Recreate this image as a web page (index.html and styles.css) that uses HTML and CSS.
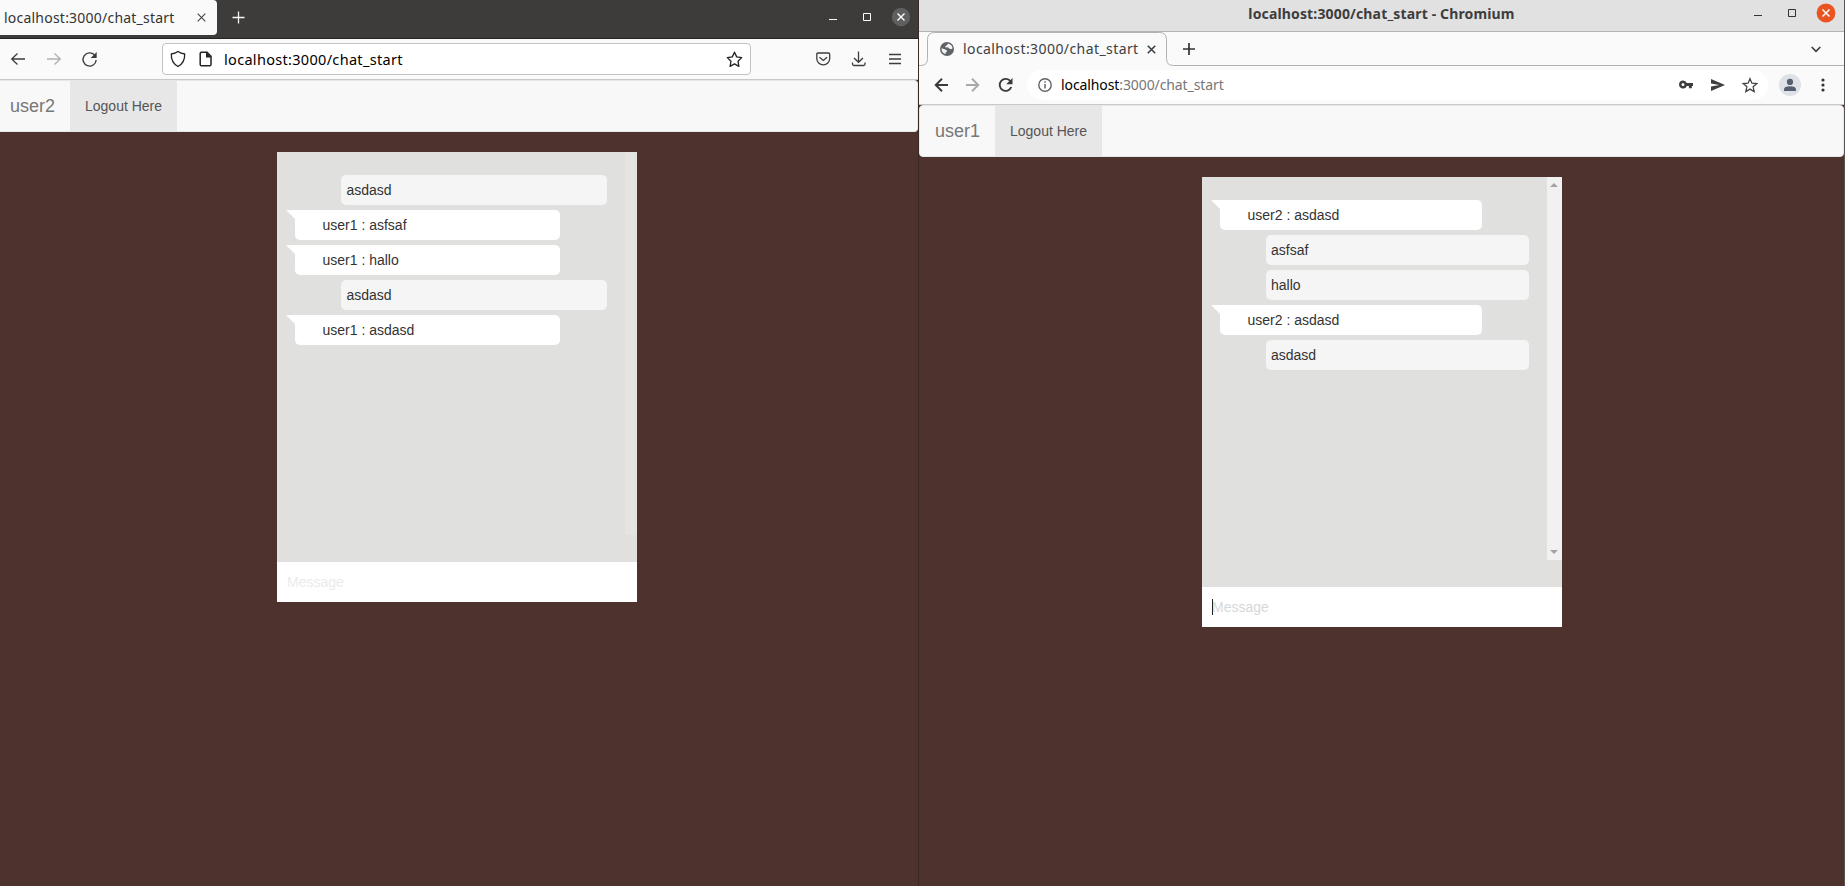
FILE: index.html
```html
<!DOCTYPE html>
<html lang="en">
<head>
<meta charset="utf-8">
<title>chat_start</title>
<link rel="stylesheet" href="styles.css">
</head>
<body>
<div class="desktop">
  <section class="window firefox">
    <header class="ff-title">
      <div class="ff-tab"><span class="ui ff-tab-text">localhost:3000/chat_start</span>
        <svg class="ff-tab-x" width="9" height="9" viewBox="0 0 9 9"><path d="M.7.7l7.6 7.6M8.3.7L.7 8.3" stroke="#444" stroke-width="1.1"/></svg>
      </div>
      <svg class="ff-plus" width="13" height="13" viewBox="0 0 13 13"><path d="M6.5 .5v12M.5 6.5h12" stroke="#f5f5f5" stroke-width="1.3"/></svg>
      <svg class="ff-controls" width="84" height="20" viewBox="0 0 84 20"><path d="M1 12.5h8" stroke="#fff"/><path d="M35.5 6.5h7v7h-7z" fill="none" stroke="#fff"/><circle cx="73" cy="10" r="9.2" fill="#5f5f5f"/><path d="M69.5 6.5l7 7M76.5 6.5l-7 7" stroke="#fff" stroke-width="1.4"/></svg>
    </header>
    <div class="ff-toolbar">
      <svg class="ff-nav" width="90" height="18" viewBox="0 0 90 18" fill="none" stroke-width="1.3"><path d="M15 9H1.5M7.5 3.5L1.7 9l5.8 5.5" stroke="#3d3d3d"/><path d="M37 9h13.500M44.500 3.500L50.300 9l-5.800 5.500" stroke="#b0b0b0"/><path d="M84.500 5A6.600 6.600 0 1 0 86.200 10" stroke="#3d3d3d" stroke-width="1.400"/><path d="M86.700 2v6h-6z" fill="#3d3d3d"/></svg>
      <div class="ff-url">
        <svg width="16" height="18" viewBox="0 0 16 18"><path d="M8 1.500C10 3 12.500 3.800 14.700 4c.2 5-1.700 9.800-6.700 12.500C3 13.800 1.100 9 1.300 4 3.500 3.800 6 3 8 1.500z" fill="none" stroke="#222" stroke-width="1.300"/></svg>
        <svg class="ff-page" width="13" height="16" viewBox="0 0 13 16"><path d="M2.500 1.200h5.500l4 4v8.300q0 1.300-1.300 1.300H2.500q-1.300 0-1.300-1.300v-11q0-1.300 1.300-1.300z" fill="none" stroke="#222" stroke-width="1.500"/><path d="M7 1v5.500h5.500z" fill="#222"/></svg>
        <span class="ui ff-url-text">localhost:3000/chat_start</span>
        <svg class="ff-star" width="17" height="17" viewBox="0 0 17 17"><path d="M8.500 1.200l2.200 4.700 5 .7-3.700 3.600.9 5.200-4.400-2.500-4.400 2.500.9-5.200L1.300 6.600l5-.7z" fill="none" stroke="#222" stroke-width="1.300" stroke-linejoin="round"/></svg>
      </div>
      <svg class="ff-actions" width="90" height="18" viewBox="0 0 90 18" fill="none" stroke="#3d3d3d" stroke-width="1.300"><path d="M3 3h10.500q1.200 0 1.200 1.200V8.500a6.400 6.400 0 0 1-12.900 0V4.200Q1.800 3 3 3z"/><path d="M4.500 7.200l3.800 3.300 3.800-3.300"/><path d="M43.500 1.500v10.500M39 8l4.500 4.300L48 8M37.500 12.500v1.500q0 1.500 1.500 1.500h9.500q1.500 0 1.500-1.500v-1.500"/><path d="M74 4.500h12M74 9h12M74 13.500h12"/></svg>
    </div>
    <nav class="navbar"><span class="brand">user2</span><span class="logout">Logout Here</span></nav>
    <main class="page">
      <div class="chat">
        <div class="list">
          <ul class="messages">
            <li class="self">asdasd</li><li class="other">user1 : asfsaf</li><li class="other">user1 : hallo</li><li class="self">asdasd</li><li class="other">user1 : asdasd</li>
          </ul>
          <div class="scroll"></div>
        </div>
        <div class="input">Message</div>
      </div>
    </main>
  </section>
  <section class="window chromium">
    <header class="cr-title"><span class="ui cr-title-text">localhost:3000/chat_start - Chromium</span>
      <svg class="cr-controls" width="84" height="20" viewBox="0 0 84 20"><path d="M1 12.500h8" stroke="#333"/><path d="M35.500 6.500h7v7h-7z" fill="none" stroke="#333"/><circle cx="73" cy="10" r="9.400" fill="#e95420"/><path d="M69.500 6.500l7 7M76.500 6.500l-7 7" stroke="#fff" stroke-width="1.500"/></svg>
    </header>
    <div class="cr-tabs">
      <svg class="cr-shape" width="260" height="34" viewBox="0 0 260 34"><path d="M0 33.500H2q6.500 0 6.500-7V7.500Q8.500.5 15.500.5h225q7 0 7 7v19q0 7 7 7h6" fill="none" stroke="#b2b2b2"/></svg>
      <svg class="cr-globe" width="14" height="14" viewBox="0 0 14 14"><circle cx="7" cy="7" r="7" fill="#5f6368"/><path d="M1.500 6.300l3.800 1.200 1.800 1.200-.4 1.200-1.300.3.600 1.900Q1.500 11.500 1.500 6.300zM7.800 1.600l-.5 1.500-1.900.8v1.500l2.400-.2 1.400 1.400 1.900.6 1.400-.6Q12.500 2.500 7.800 1.600z" fill="#f4f4f4"/></svg>
      <span class="ui cr-tab-text">localhost:3000/chat_start</span>
      <svg class="cr-x" width="9" height="9" viewBox="0 0 9 9"><path d="M.8.8l7.400 7.400M8.200.8L.8 8.200" stroke="#3c4043" stroke-width="1.600"/></svg>
      <svg class="cr-plus" width="12" height="12" viewBox="0 0 12 12"><path d="M6 0v12M0 6h12" stroke="#333" stroke-width="1.700"/></svg>
      <svg class="cr-chevron" width="10" height="7" viewBox="0 0 10 7"><path d="M.7 1L5 5.300 9.300 1" fill="none" stroke="#3d3d3d" stroke-width="1.700"/></svg>
    </div>
    <div class="cr-toolbar">
      <svg class="cr-nav" width="80" height="16" viewBox="0 0 80 16" fill="none" stroke-width="1.900"><path d="M14 8H2M8 1.800L1.700 8 8 14.200" stroke="#3a3a3a"/><path d="M32 8h12M38 1.800L44.300 8 38 14.200" stroke="#a8a8a8"/><path d="M76.500 4.300A6 6 0 1 0 77.300 10" stroke="#3a3a3a"/><path d="M78.500 1v6.300h-6.300z" fill="#3a3a3a"/></svg>
      <div class="cr-url">
        <svg width="14" height="14" viewBox="0 0 14 14"><circle cx="7" cy="7" r="6.200" fill="none" stroke="#5f6368" stroke-width="1.400"/><path d="M7 6v4.500M7 3.300v1.500" stroke="#5f6368" stroke-width="1.500"/></svg>
        <span class="ui cr-url-text"><b>localhost</b>:3000/chat_start</span>
        <svg class="cr-page" width="80" height="16" viewBox="0 0 80 16"><path fill-rule="evenodd" d="M5 3.500a4 4 0 0 1 3.800 2.600H15v2.800h-1.200v2.400h-2.900V8.900H8.800A4 4 0 1 1 5 3.500zM5 6a1.500 1.500 0 1 0 0 3 1.500 1.500 0 0 0 0-3z" fill="#3d3d3d"/><path d="M33 2l14 6-14 6V9.500L41.500 8 33 6.500z" fill="#3d3d3d"/><path d="M72 1.700l1.900 4.500 4.900.4-3.700 3.200 1.100 4.800-4.200-2.500-4.200 2.500 1.100-4.800-3.700-3.200 4.900-.4z" fill="none" stroke="#444" stroke-width="1.300"/></svg>
      </div>
      <svg class="cr-user" width="22" height="22" viewBox="0 0 22 22"><circle cx="11" cy="11" r="11" fill="#dee1e6"/><circle cx="11" cy="7.900" r="3.100" fill="#555d70"/><path d="M5 17v-1.500q0-3.300 6-3.300t6 3.300V17z" fill="#555d70"/></svg>
      <svg class="cr-dots" width="4" height="14" viewBox="0 0 4 14" fill="#333"><circle cx="2" cy="2" r="1.600"/><circle cx="2" cy="7" r="1.600"/><circle cx="2" cy="12" r="1.600"/></svg>
    </div>
    <nav class="navbar"><span class="brand">user1</span><span class="logout">Logout Here</span></nav>
    <main class="page">
      <div class="chat">
        <div class="list">
          <ul class="messages">
            <li class="other">user2 : asdasd</li><li class="self">asfsaf</li><li class="self">hallo</li><li class="other">user2 : asdasd</li><li class="self">asdasd</li>
          </ul>
          <div class="scroll">
            <svg width="8" height="4" viewBox="0 0 8 4"><path d="M0 4l4-4 4 4z" fill="#a3a3a3"/></svg>
            <svg width="8" height="4" viewBox="0 0 8 4"><path d="M0 0h8L4 4z" fill="#a3a3a3"/></svg>
          </div>
        </div>
        <div class="input focused">Message</div>
      </div>
    </main>
  </section>
</div>
</body>
</html>
```

FILE: styles.css
```css
* { box-sizing: border-box; }
body { margin: 0; font: 14px/20px "Liberation Sans", Arial, sans-serif; color: #333; overflow: hidden; }
svg { display: block; flex: none; }
.desktop { display: grid; grid-template-columns: 919px 926px; height: 886px; background: #4e322e; }
.window { display: flex; flex-direction: column; min-width: 0; }
.ui { font-family: "Noto Sans", "Open Sans", sans-serif; white-space: nowrap; flex: none; }
.firefox { border-right: 1px solid #3a2825; }
.chromium { border-right: 1px solid #5a5553; }

/* Firefox chrome */
.ff-title { height: 39px; background: #3d3c3a; border-bottom: 1px solid #242323; display: flex; align-items: flex-start; }
.ff-tab { width: 217px; height: 35px; background: #fafafa; border-radius: 0 4px 4px 0; display: flex; align-items: center; padding-left: 4px; }
.ff-tab-text { width: 170px; font-size: 14px; letter-spacing: .22px; }
.ff-tab-x { margin-left: 22.500px; }
.ff-plus { margin: 11px 0 0 15px; }
.ff-controls { margin: 7px 6px 0 auto; }
.ff-toolbar { height: 41px; background: #fafafa; border-bottom: 1px solid #c8c8c8; display: flex; align-items: center; }
.ff-nav { margin-left: 10px; }
.ff-url { margin-left: 62px; width: 589px; height: 32px; background: #fff; border: 1px solid #c2c2c2; border-radius: 4px; display: flex; align-items: center; padding: 0 7px 0 7px; }
.ff-page { margin-left: 13px; }
.ff-url-text { margin-left: 12px; color: #000; font-size: 14.500px; letter-spacing: .31px; }
.ff-star { margin-left: auto; }
.ff-actions { margin-left: 64px; }

/* Chromium chrome */
.cr-title { height: 32px; background: #e1e1e1; border-bottom: 1px solid #b4b4b4; display: grid; grid-template-columns: 1fr auto 1fr; align-items: start; }
.cr-title-text { grid-column: 2; font-weight: 700; font-size: 14px; letter-spacing: .15px; line-height: 27px; color: #3d3d3d; }
.cr-controls { justify-self: end; margin: 3px 7px 0 0; }
.cr-tabs { height: 34px; background: #fafafa; display: flex; align-items: center; box-shadow: inset 0 -1px #b2b2b2; }
.cr-shape { background: #fafafa; margin-right: -239px; }
.cr-globe, .cr-x, .cr-tab-text { position: relative; }
.cr-tab-text { margin-left: 9px; width: 176px; font-size: 14px; letter-spacing: .42px; color: #3c4043; }
.cr-x { margin-left: 7.500px; }
.cr-plus { margin-left: 27.500px; }
.cr-chevron { margin: 0 23px 0 auto; }
.cr-toolbar { height: 39px; background: #fafafa; border-bottom: 1px solid #c8c8c8; display: flex; align-items: center; }
.cr-nav { margin-left: 14.500px; }
.cr-url { margin-left: 13.500px; width: 741px; height: 30px; border-radius: 15px; background: #fff; display: flex; align-items: center; padding: 0 10px 0 11px; }
.cr-url-text { margin-left: 9px; color: #777; font-size: 14px; letter-spacing: -.1px; }
.cr-url-text b { font-weight: 400; color: #000; }
.cr-page { margin-left: auto; }
.cr-user { margin-left: 11px; }
.cr-dots { margin-left: 19.500px; }

/* Web page */
.navbar { height: 52px; flex: none; background: #f8f8f8; border: 1px solid #e7e7e7; border-radius: 4px; display: flex; }
.firefox .navbar { border-left: 0; border-radius: 0 4px 4px 0; }
.brand { width: 75px; padding-left: 15px; font-size: 18px; line-height: 50px; color: #777; }
.firefox .brand { width: 70px; padding-left: 10px; line-height: 51px; }
.logout { width: 107px; padding-left: 15px; line-height: 50px; color: #555; background: #e7e7e7; }
.page { flex: 1; padding: 20px 0 0 277px; }
.chromium .page { padding-left: 283px; }
.chat { width: 360px; height: 450px; background: #e0e0de; display: flex; flex-direction: column; justify-content: space-between; }
.list { height: 383px; display: flex; }
.messages { flex: 1; margin: 0; padding: 23px 0 0 18px; list-style: none; display: flex; flex-direction: column; gap: 5px; }
.messages li { height: 30px; border-radius: 5px; padding: 5px; width: 266px; }
.chromium .messages li { width: 263px; }
.messages .self { background: #f5f5f5; margin-left: 46px; }
.firefox .messages .self { padding-left: 5.500px; }
.messages .other { background: #fff; position: relative; border-top-left-radius: 0; width: 265px; padding-left: 27.500px; }
.chromium .messages .other { width: 262px; }
.other::before { content: ""; position: absolute; left: -9px; top: 0; width: 9px; height: 9px; background: #fff; clip-path: polygon(0 0, 100% 0, 100% 100%); }
.scroll { width: 12px; background: #e4e5e2; }
.chromium .scroll { width: 15px; background: #f1f1f1; display: flex; flex-direction: column; align-items: center; justify-content: space-between; padding: 6px 0; }
.chromium .scroll svg { margin-right: 1px; }
.input { height: 40px; background: #fff; padding: 10px; color: #ebebeb; position: relative; }
.focused { color: #d8d8d8; }
.focused::before { content: ""; position: absolute; left: 10px; top: 12px; width: 1px; height: 16px; background: #222; }
```
